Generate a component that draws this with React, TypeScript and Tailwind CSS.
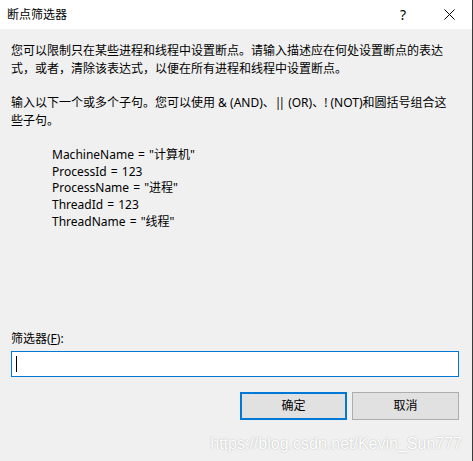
import React from "react";

export default function App() {
  return (
    <div
      className="w-[473px] h-[461px] bg-[#f0f0f0] border-r border-[#3a3a3a] flex flex-col text-black text-[12px] overflow-hidden"
      style={{ fontFamily: '"Noto Sans", "Noto Sans CJK SC", sans-serif' }}
    >
      {/* Title bar */}
      <div className="h-[29px] bg-white flex items-center shrink-0">
        <div className="pl-[7px] leading-[16px]">断点筛选器</div>
        <div className="ml-auto flex">
          <div className="w-[46px] h-[29px] flex items-center justify-center text-[14px] leading-none">?</div>
          <div className="w-[46px] h-[29px] flex items-center justify-center">
            <svg width="11" height="11" viewBox="0 0 11 11">
              <path d="M0.5 0.5 L10.5 10.5 M10.5 0.5 L0.5 10.5" stroke="#000" strokeWidth="1" fill="none" />
            </svg>
          </div>
        </div>
      </div>

      <div className="pl-[11px] pr-[13px] flex flex-col">
        <p className="mt-[13px] leading-[18px]">
          您可以限制只在某些进程和线程中设置断点。请输入描述应在何处设置断点的表达
          <br />
          式，或者，清除该表达式，以便在所有进程和线程中设置断点。
        </p>
        <p className="mt-[16px] leading-[18px]">
          输入以下一个或多个子句。您可以使用 &amp; (AND)、<span className="tracking-[-3px]">|</span>| (OR)、! (NOT)和圆括号组合这
          <br />
          些子句。
        </p>
        <div className="mt-[17px] pl-[41px] leading-[16.7px] [word-spacing:1px]">
          <div>MachineName = "计算机"</div>
          <div>ProcessId = 123</div>
          <div>ProcessName = "进程"</div>
          <div>ThreadId = 123</div>
          <div>ThreadName = "线程"</div>
        </div>

        <div className="mt-[100px] leading-[16px]">
          筛选器(<span className="underline">F</span>):
        </div>
        <div className="mt-[4px] h-[26px] bg-white border border-[#0078d7] flex items-center">
          <span className="ml-[4px] w-px h-[16px] bg-black" />
        </div>

        <div className="mt-[15px] flex justify-end gap-[5px]">
          <button className="w-[107px] h-[28px] bg-[#e1e1e1] border-2 border-[#0078d7] flex items-center justify-center leading-none">
            确定
          </button>
          <button className="w-[107px] h-[28px] bg-[#e1e1e1] border border-[#adadad] flex items-center justify-center leading-none">
            取消
          </button>
        </div>
      </div>

      <div
        className="mt-[14px] pr-[10px] text-right text-[16px] leading-[20px] text-white [text-shadow:0_0_1.5px_rgba(0,0,0,0.3)]"
        style={{ fontFamily: '"Liberation Sans", Arial, sans-serif' }}
      >
        https://blog.csdn.net/Kevin_Sun777
      </div>
    </div>
  );
}
